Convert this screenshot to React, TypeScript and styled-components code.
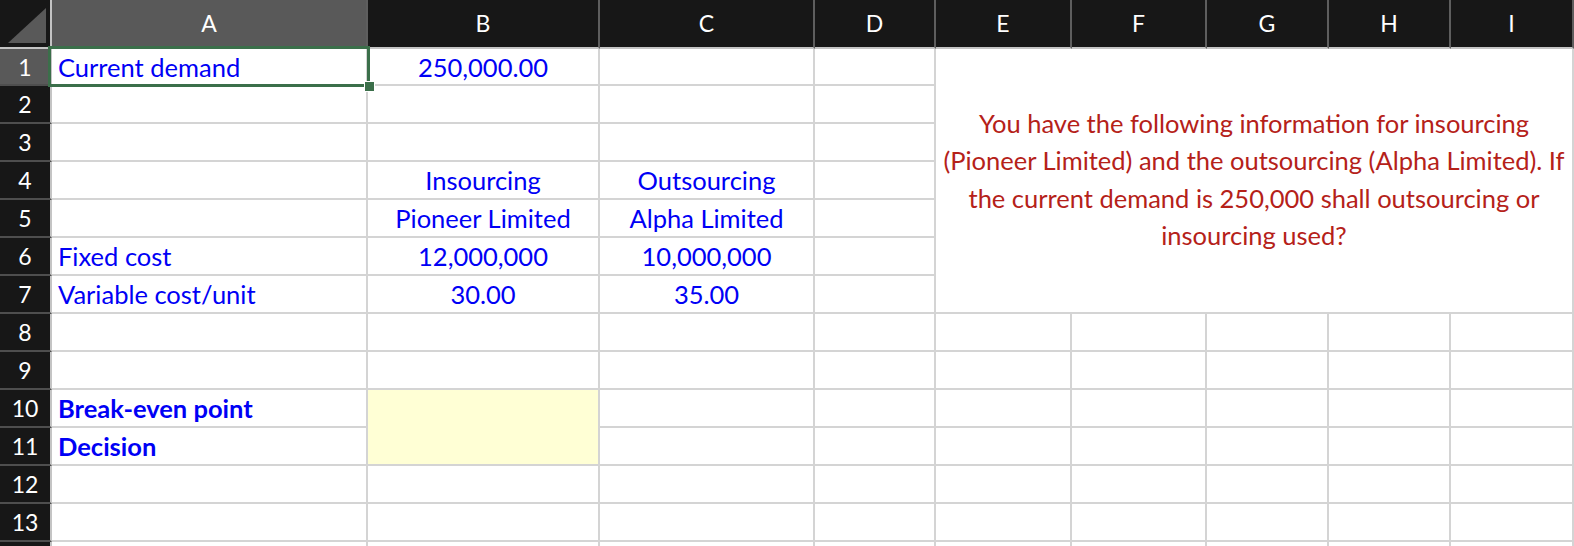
import React from 'react'
import styled, { createGlobalStyle } from 'styled-components'

const GlobalStyle = createGlobalStyle`
  html, body { margin: 0; padding: 0; background: #ffffff; overflow: hidden; }
  * { box-sizing: border-box; }
`

const FONT = `Lato, "Noto Sans", sans-serif`
const COLS = [52, 316, 232, 215, 121, 136, 135, 122, 122, 123]
const LETTERS = ['A', 'B', 'C', 'D', 'E', 'F', 'G', 'H', 'I']

type CellData = { text: string; bold?: boolean }
const DATA: Record<string, CellData> = {
  A1: { text: 'Current demand' },
  B1: { text: '250,000.00' },
  B4: { text: 'Insourcing' },
  C4: { text: 'Outsourcing' },
  B5: { text: 'Pioneer Limited' },
  C5: { text: 'Alpha Limited' },
  A6: { text: 'Fixed cost' },
  B6: { text: '12,000,000' },
  C6: { text: '10,000,000' },
  A7: { text: 'Variable cost/unit' },
  B7: { text: '30.00' },
  C7: { text: '35.00' },
  A10: { text: 'Break-even point', bold: true },
  A11: { text: 'Decision', bold: true },
}

// E1:I7 holds the note, B10:B11 is the yellow input block
const isCovered = (col: number, row: number) =>
  (col >= 4 && row <= 7) || (col === 1 && (row === 10 || row === 11))

export default function App() {
  const rows = Array.from({ length: 14 }, (_, i) => i + 1)
  return (
    <>
      <GlobalStyle />
      <Sheet>
        <Corner />
        {LETTERS.map((l, i) => (
          <ColHead key={l} $selected={i === 0}>{l}</ColHead>
        ))}
        <TextBox>
          You have the following information for insourcing<br />
          (Pioneer Limited) and the outsourcing (Alpha Limited). If<br />
          the current demand is 250,000 shall outsourcing or<br />
          insourcing used?
        </TextBox>
        <Filled />
        {rows.map(r => (
          <React.Fragment key={r}>
            <RowHead $selected={r === 1}>{r < 14 ? r : ''}</RowHead>
            {LETTERS.map((l, ci) => {
              if (isCovered(ci, r)) return null
              const d = DATA[`${l}${r}`]
              return (
                <Cell key={l} $align={ci === 0 ? 'left' : 'center'} $bold={d?.bold}>
                  {d?.text}
                </Cell>
              )
            })}
          </React.Fragment>
        ))}
        <Selection><Handle /></Selection>
      </Sheet>
    </>
  )
}

const Sheet = styled.div`
  position: relative;
  display: grid;
  grid-template-columns: ${COLS.map(c => `${c}px`).join(' ')};
  grid-template-rows: 49px 37px repeat(13, 38px);
  width: 1574px;
  height: 546px;
  overflow: hidden;
  font-family: ${FONT};
`

const Corner = styled.div`
  position: relative;
  background: #171717;
  border-right: 2px solid #c4c4c4;
  border-bottom: 2px solid #c4c4c4;
  &::after {
    content: '';
    position: absolute;
    left: 8px;
    top: 8px;
    width: 38px;
    height: 35px;
    background: #595959;
    clip-path: polygon(100% 0, 100% 100%, 0 100%);
  }
`

const ColHead = styled.div<{ $selected?: boolean }>`
  display: flex;
  align-items: center;
  justify-content: center;
  background: ${p => (p.$selected ? '#595959' : '#171717')};
  border-right: 2px solid #5e5e5e;
  border-bottom: 2px solid #c4c4c4;
  color: #ffffff;
  font-size: 23px;
  padding-bottom: 2px;
`

const RowHead = styled.div<{ $selected?: boolean }>`
  display: flex;
  align-items: center;
  justify-content: center;
  background: ${p => (p.$selected ? '#595959' : '#171717')};
  border-right: 2px solid #c4c4c4;
  border-bottom: 2px solid #4e4e4e;
  color: #ffffff;
  font-size: 23px;
`

const Cell = styled.div<{ $align: 'left' | 'center'; $bold?: boolean }>`
  display: flex;
  align-items: center;
  justify-content: ${p => (p.$align === 'left' ? 'flex-start' : 'center')};
  padding: 0 6px;
  border-right: 2px solid #d4d4d4;
  border-bottom: 2px solid #d4d4d4;
  color: #0000f5;
  font-size: 25.5px;
  font-weight: ${p => (p.$bold ? 700 : 400)};
  white-space: nowrap;
  overflow: hidden;
`

const TextBox = styled.div`
  grid-column: 6 / span 5;
  grid-row: 2 / span 7;
  display: flex;
  align-items: center;
  justify-content: center;
  text-align: center;
  border-right: 2px solid #d4d4d4;
  border-bottom: 2px solid #d4d4d4;
  background: #ffffff;
  color: #b52119;
  font-size: 25.5px;
  line-height: 37.5px;
  white-space: nowrap;
  padding-bottom: 2px;
`

const Filled = styled.div`
  grid-column: 3;
  grid-row: 11 / span 2;
  background: #ffffd5;
  border-right: 2px solid #d4d4d4;
  border-bottom: 2px solid #d4d4d4;
`

const Selection = styled.div`
  position: absolute;
  left: 48px;
  top: 46px;
  width: 322px;
  height: 41px;
  border: 3px solid #3b6f4a;
  pointer-events: none;
`

const Handle = styled.div`
  position: absolute;
  right: -8px;
  bottom: -8px;
  width: 11px;
  height: 11px;
  background: #3b6f4a;
  border: 1px solid #ffffff;
`
